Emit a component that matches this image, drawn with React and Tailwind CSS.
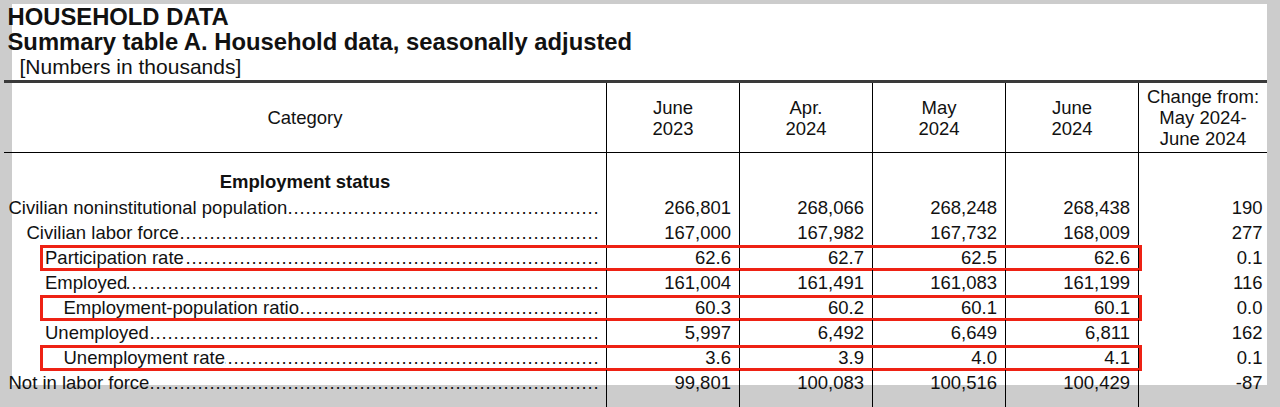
import React from 'react';

const COLS = 'grid grid-cols-[602px_133px_133px_133px_133px_129px]';

const rows = [
  { label: 'Civilian noninstitutional population', indent: 'pl-[4.5px]', values: ['266,801', '268,066', '268,248', '268,438'], change: '190' },
  { label: 'Civilian labor force', indent: 'pl-[22.5px]', values: ['167,000', '167,982', '167,732', '168,009'], change: '277' },
  { label: 'Participation rate', indent: 'pl-[41px]', values: ['62.6', '62.7', '62.5', '62.6'], change: '0.1', boxed: true },
  { label: 'Employed', indent: 'pl-[41px]', values: ['161,004', '161,491', '161,083', '161,199'], change: '116' },
  { label: 'Employment-population ratio', indent: 'pl-[59.5px]', values: ['60.3', '60.2', '60.1', '60.1'], change: '0.0', boxed: true },
  { label: 'Unemployed', indent: 'pl-[41px]', values: ['5,997', '6,492', '6,649', '6,811'], change: '162' },
  { label: 'Unemployment rate', indent: 'pl-[59.5px]', values: ['3.6', '3.9', '4.0', '4.1'], change: '0.1', boxed: true },
  { label: 'Not in labor force', indent: 'pl-[4.5px]', values: ['99,801', '100,083', '100,516', '100,429'], change: '-87' },
];

const heads = [
  ['June', '2023'],
  ['Apr.', '2024'],
  ['May', '2024'],
  ['June', '2024'],
];

function DataRow({ row }) {
  return (
    <div className={`${COLS} relative h-[25px] leading-[25px]`}>
      <div className={`flex ${row.indent} pr-[6.5px] whitespace-nowrap`}>
        <span>{row.label}</span>
        <span className="flex-1 flex justify-end overflow-hidden">
          <span className="tracking-[0.86px]">{'.'.repeat(120)}</span>
        </span>
      </div>
      {row.values.map((v, i) => (
        <div key={i} className="border-l border-black text-right pr-[8px]">{v}</div>
      ))}
      <div className="border-l border-black text-right pr-[4.5px]">{row.change}</div>
      {row.boxed && (
        <div className="absolute left-[36px] top-0 h-[26px] w-[1102px] border-[3px] border-[#ee2214] pointer-events-none" />
      )}
    </div>
  );
}

export default function App() {
  return (
    <div className="h-[407px] overflow-hidden bg-[#cccccc] pt-[13px] pl-[12px] pr-[13px] text-[#111] font-['Liberation_Sans',Arial,sans-serif]">
      <div className="h-[381px] bg-white">
        <div className="-ml-[8px] -mt-[9px] w-[1263px]">
          <div className="pl-[3.5px] text-[23.8px] leading-[25px] font-bold">HOUSEHOLD DATA</div>
          <div className="pl-[3.5px] text-[23.8px] leading-[25px] font-bold">Summary table A. Household data, seasonally adjusted</div>
          <div className="pl-[15.5px] mt-[2px] text-[21px] leading-[22px]">[Numbers in thousands]</div>

          <div className="mt-[2px] h-[3px] bg-[#3a3a3a]" />

          <div className="text-[18.5px]">
            {/* header */}
            <div className={`${COLS} h-[70px] leading-[21px] border-b border-black`}>
              <div className="flex items-center justify-center">Category</div>
              {heads.map((h, i) => (
                <div key={i} className="border-l border-black flex flex-col items-center justify-center">
                  <span>{h[0]}</span>
                  <span>{h[1]}</span>
                </div>
              ))}
              <div className="border-l border-black flex flex-col items-center justify-center">
                <span>Change from:</span>
                <span>May 2024-</span>
                <span>June 2024</span>
              </div>
            </div>

            {/* section title */}
            <div className={`${COLS} h-[42px]`}>
              <div className="pt-[16px] leading-[25px] text-center font-bold">Employment status</div>
              <div className="border-l border-black" />
              <div className="border-l border-black" />
              <div className="border-l border-black" />
              <div className="border-l border-black" />
              <div className="border-l border-black" />
            </div>

            {rows.map((r, i) => (
              <DataRow key={i} row={r} />
            ))}

            {/* column rules running past the page */}
            <div className={`${COLS} h-[30px]`}>
              <div />
              <div className="border-l border-black" />
              <div className="border-l border-black" />
              <div className="border-l border-black" />
              <div className="border-l border-black" />
              <div className="border-l border-black" />
            </div>
          </div>
        </div>
      </div>
    </div>
  );
}
